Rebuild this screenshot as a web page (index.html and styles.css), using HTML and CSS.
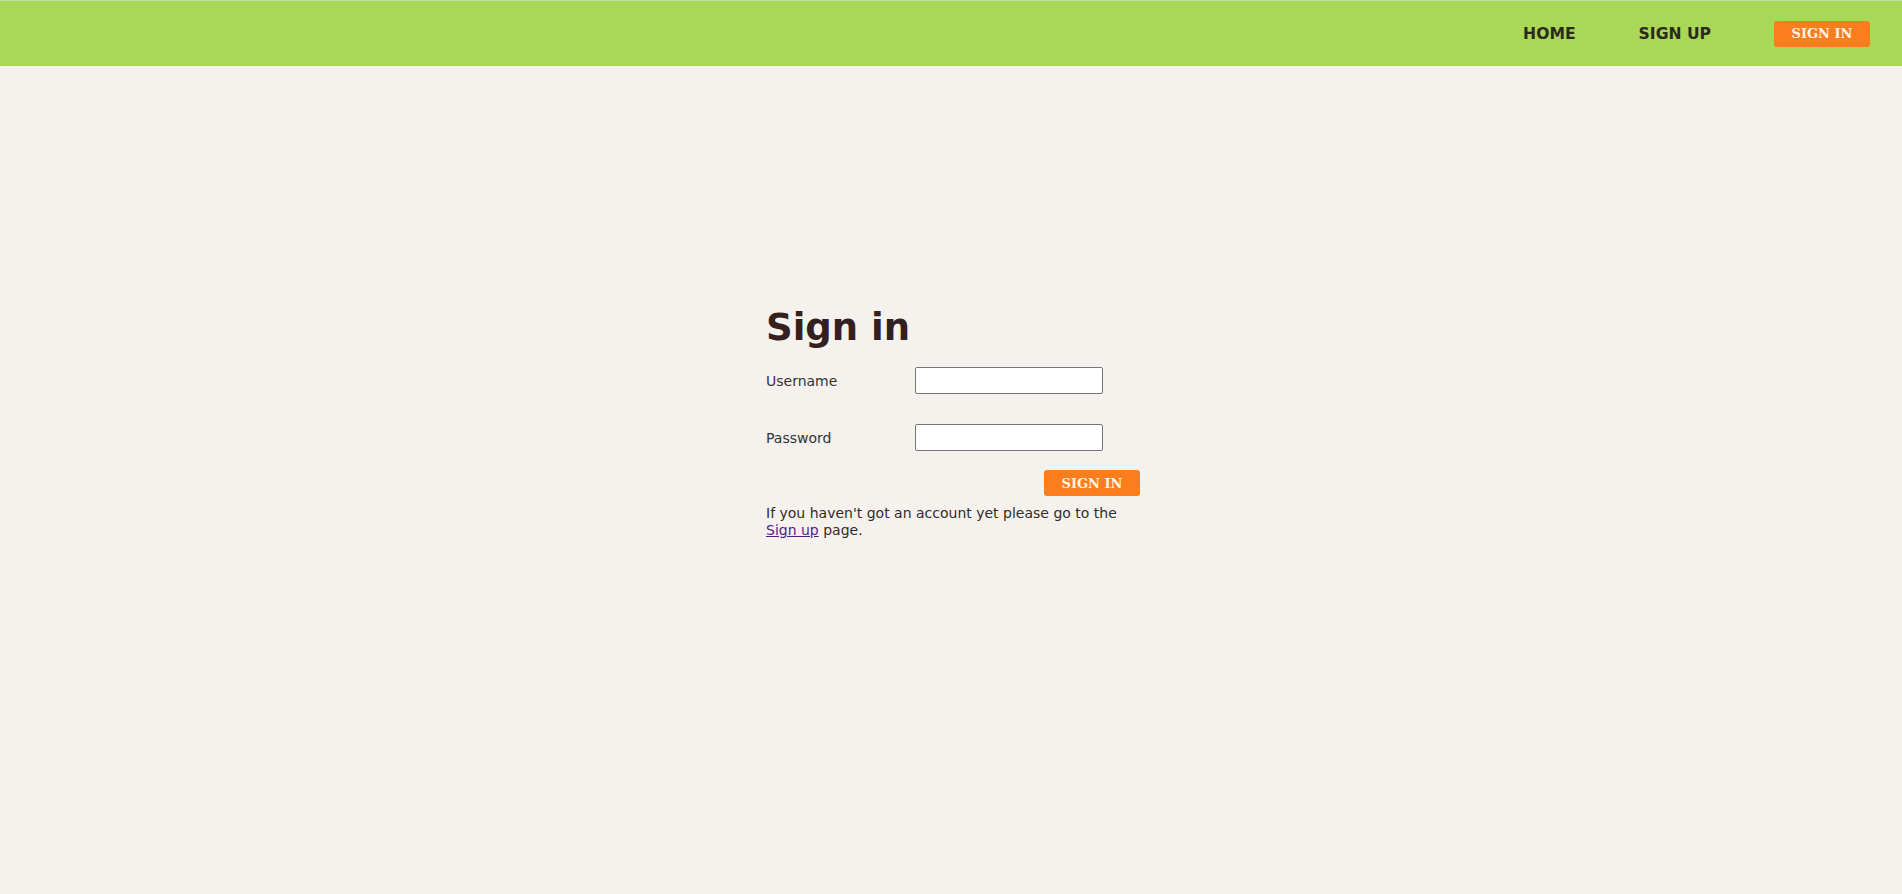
FILE: index.html
```html
<!DOCTYPE html>
<html lang="en">
<head>
  <meta charset="UTF-8" />
  <title>Sign in</title>
  <link rel="stylesheet" href="styles.css">
</head>
<body>
  <header class="topbar">
    <nav class="nav">
      <a href="#" class="nav-link">HOME</a>
      <a href="#" class="nav-link">SIGN UP</a>
      <a href="#" class="nav-btn">SIGN IN</a>
    </nav>
  </header>

  <main class="page">
    <form class="signin">
      <h1>Sign in</h1>

      <div class="row">
        <label for="username">Username</label>
        <input type="text" id="username" />
      </div>

      <div class="row">
        <label for="password">Password</label>
        <input type="password" id="password" />
      </div>

      <div class="actions">
        <button type="button" class="btn">SIGN IN</button>
      </div>

      <p class="note">If you haven't got an account yet please go to the <a href="#">Sign up</a> page.</p>
    </form>
  </main>
</body>
</html>
```

FILE: styles.css
```css
body {
  margin: 0;
  font-family: "DejaVu Sans", Verdana, sans-serif;
  background: #f5f2ee;
  color: #332a2a;
}

.topbar {
  background: #a8d856;
  border-top: 1px solid #c3dea6;
  height: 65px;
  display: flex;
  align-items: center;
  justify-content: flex-end;
  padding-right: 32px;
}

.nav {
  display: flex;
  align-items: center;
  gap: 63px;
}

.nav-link {
  font-size: 15.6px;
  font-weight: bold;
  color: #2b2a1c;
  text-decoration: none;
}

.nav-btn,
.btn {
  display: inline-flex;
  align-items: center;
  justify-content: center;
  width: 96px;
  height: 26px;
  background: #fc7d1b;
  color: #fff4e6;
  border: none;
  border-radius: 3px;
  font-family: "DejaVu Serif", Georgia, serif;
  font-size: 13px;
  font-weight: bold;
  text-decoration: none;
  padding: 0;
}

.page {
  display: flex;
  justify-content: center;
  padding-top: 240px;
}

.signin {
  width: 374px;
  margin-left: 4px;
}

h1 {
  font-size: 37px;
  line-height: 44px;
  margin: 0 0 17px;
  color: #33201f;
}

.row {
  display: flex;
  align-items: center;
  margin-bottom: 30px;
}

.row label {
  width: 149px;
  font-size: 14px;
  color: #333;
}

.row input {
  box-sizing: border-box;
  width: 188px;
  height: 27px;
  border: 1px solid #767676;
  border-radius: 2px;
  background: #fff;
  margin: 0;
}

.actions {
  display: flex;
  justify-content: flex-end;
  margin-top: -11px;
}

.note {
  font-size: 14px;
  line-height: 17px;
  margin: 9px 0 0;
}

.note a {
  color: #551a8b;
}
```
